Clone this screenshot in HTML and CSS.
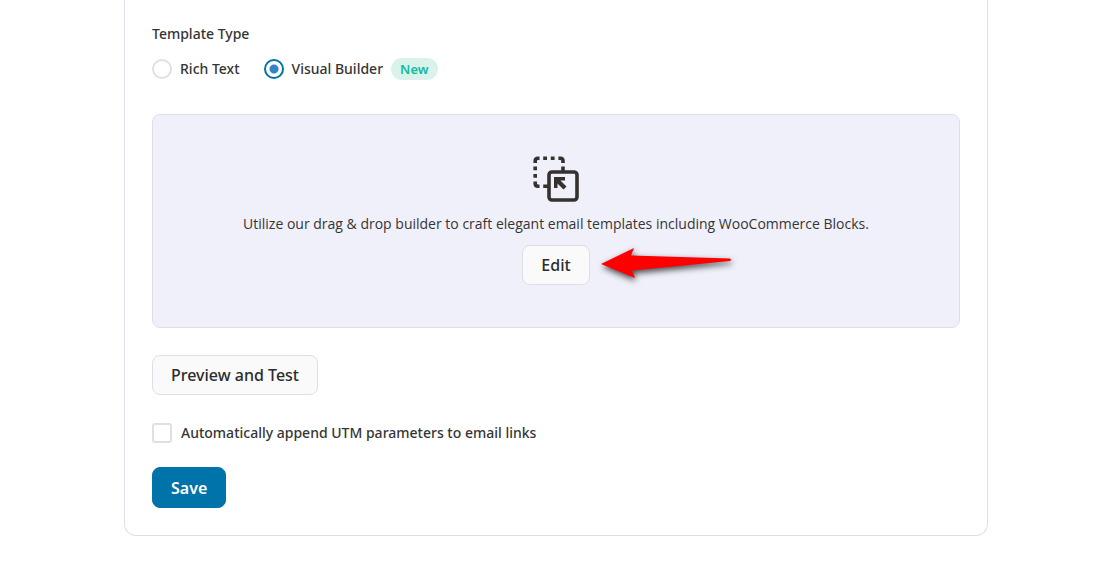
FILE: index.html
```html
<!DOCTYPE html>
<html lang="en">
  <head>
    <meta charset="utf-8">
    <title>Edit Template</title>
    <link rel="stylesheet" href="styles.css">
  </head>
  <body>
    <main class="panel">
      <form>
        <fieldset class="template-type">
          <legend>Template Type</legend>
          <div class="options">
            <label class="option">
              <input type="radio" name="template_type" value="rich">
              Rich Text
            </label>
            <label class="option">
              <input type="radio" name="template_type" value="visual" checked>
              Visual Builder
              <span class="badge">New</span>
            </label>
          </div>
        </fieldset>

        <section class="builder">
          <svg class="builder-icon" viewBox="0 0 46 46" fill="none" stroke="#35312f" stroke-width="4">
            <path stroke-width="3.6" d="M2.2 7V5Q2.2 2.2 5 2.2H6.5M10.2 2.2H14M17.8 2.2H21.6M25.4 2.2H27.5Q30 2.2 30 5V7M30 10.5V15M2.2 10.5V14.3M2.2 18V21.8M2.2 25.5V27.5Q2.2 30.2 5 30.2H6.5M10.2 30.2H15"/>
            <rect x="16" y="16" width="28" height="28" rx="3" stroke-width="3.6"/>
            <path fill="#35312f" stroke="none" d="M21 21H32V24.5H27.5L33.5 30.5L30.5 33.5L24.5 27.5V32H21Z"/>
          </svg>
          <p>Utilize our drag &amp; drop builder to craft elegant email templates including WooCommerce Blocks.</p>
          <div class="edit">
            <button type="button" class="btn">Edit</button>
            <svg class="arrow" viewBox="0 0 150 45">
              <path fill="#fe0000" d="M11 24L44 8L41 15.5L140 18.5Q142 20 140 21L42 30.5L45 38Z"/>
            </svg>
          </div>
        </section>

        <button type="button" class="btn">Preview and Test</button>

        <label class="utm">
          <input type="checkbox" name="utm">
          Automatically append UTM parameters to email links
        </label>

        <button type="submit" class="btn btn-primary">Save</button>
      </form>
    </main>
  </body>
</html>
```

FILE: styles.css
```css
* {
  box-sizing: border-box;
}
body {
  margin: 0 108px 0 124px;
  background: #fff;
  color: #353535;
  font-family: "Open Sans", "Noto Sans", sans-serif;
  font-size: 14px;
  line-height: 20px;
}
.panel {
  padding: 24px 27px 27px;
  border: 1px solid #dedeeb;
  border-top: 0;
  border-radius: 0 0 12px 12px;
}
.template-type {
  margin: 0;
  padding: 0;
  border: 0;
}
.template-type,
.utm,
.btn {
  font-family: "Noto Sans", "Open Sans", sans-serif;
  font-weight: 500;
}
.template-type legend {
  padding: 0;
}
.options {
  display: flex;
  flex-wrap: wrap;
  gap: 24px;
  margin-top: 14px;
}
.option {
  display: flex;
  align-items: center;
  gap: 8px;
}
input {
  appearance: none;
  flex: none;
  width: 20px;
  height: 20px;
  margin: 0;
  border: 2px solid #dfdfec;
  background: #fff;
}
input[type="radio"] {
  border-radius: 50%;
}
input[type="radio"]:checked {
  border-color: #0073aa;
  background: radial-gradient(circle, #3582c4 4px, #fff 5px);
}
input[type="checkbox"] {
  border-radius: 3px;
}
.badge {
  padding: 1px 9px;
  border-radius: 11px;
  background: #d9f3ec;
  color: #17b99c;
  font-size: 13px;
  font-weight: 600;
}

/* drag & drop builder box */
.builder {
  display: flex;
  flex-direction: column;
  align-items: center;
  margin: 34px 0 27px;
  padding: 41px 20px 42px;
  border: 1px solid #dedeeb;
  border-radius: 8px;
  background: #f0f0fa;
  text-align: center;
}
.builder-icon {
  width: 46px;
  height: 46px;
}
.builder p {
  margin: 12px 0 11px;
}
.edit {
  position: relative;
}
.arrow {
  position: absolute;
  top: -5px;
  left: 100%;
  width: 150px;
  height: 45px;
  overflow: visible;
  filter: drop-shadow(1px 3px 3px rgba(0, 0, 0, 0.7));
}

.btn {
  display: block;
  height: 40px;
  padding: 0 18px;
  border: 1px solid #dedeeb;
  border-radius: 8px;
  background: #fafafa;
  color: #2c2c2c;
  font-size: 16px;
  cursor: pointer;
}
.btn-primary {
  height: 41px;
  border-color: #0073aa;
  background: #0073aa;
  color: #fff;
  font-weight: 600;
}
.utm {
  display: flex;
  align-items: center;
  gap: 9px;
  margin: 28px 0 24px;
}
```
